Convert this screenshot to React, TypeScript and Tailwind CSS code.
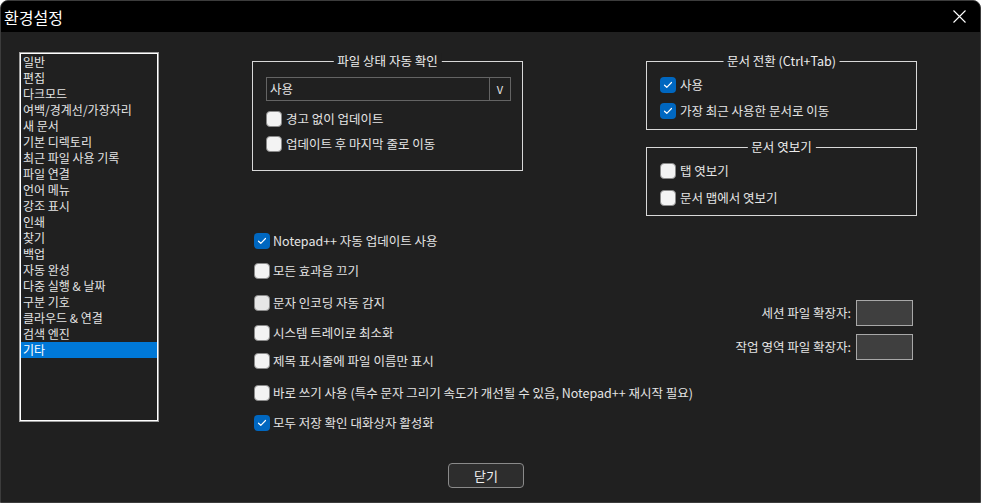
import React from "react";

const FONT = { fontFamily: '"Noto Sans CJK KR", "Noto Sans", sans-serif' };

const listItems = [
  "일반",
  "편집",
  "다크모드",
  "여백/경계선/가장자리",
  "새 문서",
  "기본 디렉토리",
  "최근 파일 사용 기록",
  "파일 연결",
  "언어 메뉴",
  "강조 표시",
  "인쇄",
  "찾기",
  "백업",
  "자동 완성",
  "다중 실행 & 날짜",
  "구분 기호",
  "클라우드 & 연결",
  "검색 엔진",
  "기타",
];

function Box({ checked, dim }: { checked?: boolean; dim?: boolean }) {
  if (checked) {
    return (
      <span className="w-[16px] h-[16px] rounded-[4px] bg-[#0067c0] flex items-center justify-center shrink-0">
        <svg width="10" height="8" viewBox="0 0 10 8" fill="none">
          <path d="M1.5 4.2 L3.8 6.3 L8.5 1.5" stroke="#ffffff" strokeWidth="1.2" strokeLinecap="round" strokeLinejoin="round" />
        </svg>
      </span>
    );
  }
  return (
    <span
      className={
        "w-[16px] h-[16px] rounded-[4px] border border-[#8a8a8a] shrink-0 " +
        (dim ? "bg-[#e6e6e6]" : "bg-[#f3f3f3]")
      }
    />
  );
}

function Check({
  label,
  checked,
  dim,
  gap = "gap-[3px]",
  className = "",
}: {
  label: string;
  checked?: boolean;
  dim?: boolean;
  gap?: string;
  className?: string;
}) {
  return (
    <div className={"flex items-center h-[16px] whitespace-nowrap " + gap + " " + className}>
      <Box checked={checked} dim={dim} />
      <span className="text-[12.5px] leading-[16px] text-[#e4e4e4]">{label}</span>
    </div>
  );
}

function Group({
  title,
  className,
  children,
}: {
  title: string;
  className: string;
  children: React.ReactNode;
}) {
  return (
    <div className={"relative border border-[#d8d8d8] " + className}>
      <span className="absolute -top-[9px] left-1/2 -translate-x-1/2 bg-[#202020] px-[4px] text-[12.5px] leading-[16px] text-[#ececec] whitespace-nowrap">
        {title}
      </span>
      {children}
    </div>
  );
}

export default function App() {
  return (
    <div
      className="w-[981px] h-[503px] bg-[#202020] flex flex-col overflow-hidden rounded-t-[8px] border border-[#3c3c3c]"
      style={FONT}
    >
      {/* Title bar */}
      <div className="h-[31px] bg-black flex items-center justify-between pl-[3px] pr-[14px] shrink-0">
        <span className="text-[16px] text-white leading-none">환경설정</span>
        <svg width="13" height="13" viewBox="0 0 13 13">
          <path d="M0.5 0.5 L12.5 12.5 M12.5 0.5 L0.5 12.5" stroke="#ffffff" strokeWidth="1.1" />
        </svg>
      </div>

      {/* Body */}
      <div className="flex flex-col">
        <div className="flex items-start pt-[20px] pl-[18px]">
          {/* List */}
          <div className="w-[140px] h-[370px] border border-[#a0a0a0] shrink-0">
            <div className="w-full h-full border border-white flex flex-col">
              {listItems.map((it, i) => (
                <div
                  key={it}
                  className={
                    "h-[16px] leading-[16px] pl-[2px] text-[12px] whitespace-nowrap " +
                    (i === listItems.length - 1 ? "bg-[#0078d7] text-white" : "text-[#e4e4e4]")
                  }
                >
                  {it}
                </div>
              ))}
            </div>
          </div>

          {/* Main */}
          <div className="ml-[93px] w-[665px] flex flex-col">
            <div className="mt-[9px] flex items-start justify-between">
              <Group title="파일 상태 자동 확인" className="w-[271px] h-[110px] pl-[13px] pt-[15px]">
                <div className="w-[245px] h-[24px] border border-[#646464] flex">
                  <span className="flex-1 text-[12.5px] leading-[22px] pl-[3px] text-[#e4e4e4]">사용</span>
                  <span className="w-[21px] border-l border-[#646464] text-[11px] leading-[22px] text-center text-[#e4e4e4]">
                    V
                  </span>
                </div>
                <Check label="경고 없이 업데이트" gap="gap-[4px]" className="mt-[10px]" />
                <Check label="업데이트 후 마지막 줄로 이동" gap="gap-[4px]" className="mt-[9px]" />
              </Group>

              <div className="w-[271px] flex flex-col">
                <Group title="문서 전환 (Ctrl+Tab)" className="h-[69px] pl-[13px] pt-[15px]">
                  <Check label="사용" checked gap="gap-[4px]" />
                  <Check label="가장 최근 사용한 문서로 이동" checked gap="gap-[4px]" className="mt-[10px]" />
                </Group>
                <Group title="문서 엿보기" className="mt-[17px] h-[69px] pl-[13px] pt-[15px]">
                  <Check label="탭 엿보기" gap="gap-[4px]" />
                  <Check label="문서 맵에서 엿보기" gap="gap-[4px]" className="mt-[11px]" />
                </Group>
              </div>
            </div>

            <div className="flex items-start">
              <div className="flex-1 flex flex-col pl-[2px] mt-[17px]">
                <Check label="Notepad++ 자동 업데이트 사용" checked />
                <Check label="모든 효과음 끄기" className="mt-[14px]" />
                <Check label="문자 인코딩 자동 감지" dim className="mt-[16px]" />
                <Check label="시스템 트레이로 최소화" className="mt-[14px]" />
                <Check label="제목 표시줄에 파일 이름만 표시" className="mt-[12px]" />
                <Check
                  label="바로 쓰기 사용 (특수 문자 그리기 속도가 개선될 수 있음, Notepad++ 재시작 필요)"
                  className="mt-[16px]"
                />
                <Check label="모두 저장 확인 대화상자 활성화" checked className="mt-[14px]" />
              </div>
              <div className="mt-[84px] mr-[4px] flex flex-col items-end gap-[8px]">
                <div className="flex items-center gap-[5px]">
                  <span className="text-[12.5px] text-[#e4e4e4] whitespace-nowrap">세션 파일 확장자:</span>
                  <span className="w-[57px] h-[26px] border border-[#a8a8a8] bg-[#3f3f3f]" />
                </div>
                <div className="flex items-center gap-[5px]">
                  <span className="text-[12.5px] text-[#e4e4e4] whitespace-nowrap">작업 영역 파일 확장자:</span>
                  <span className="w-[57px] h-[26px] border border-[#a8a8a8] bg-[#3f3f3f]" />
                </div>
              </div>
            </div>
          </div>
        </div>

        <div className="pl-[447px] mt-[32px]">
          <button className="w-[76px] h-[25px] rounded-[4px] border border-[#8a8a8a] bg-[#2d2d2d] text-[13px] text-[#f0f0f0] leading-none flex items-center justify-center">
            닫기
          </button>
        </div>
      </div>
    </div>
  );
}
